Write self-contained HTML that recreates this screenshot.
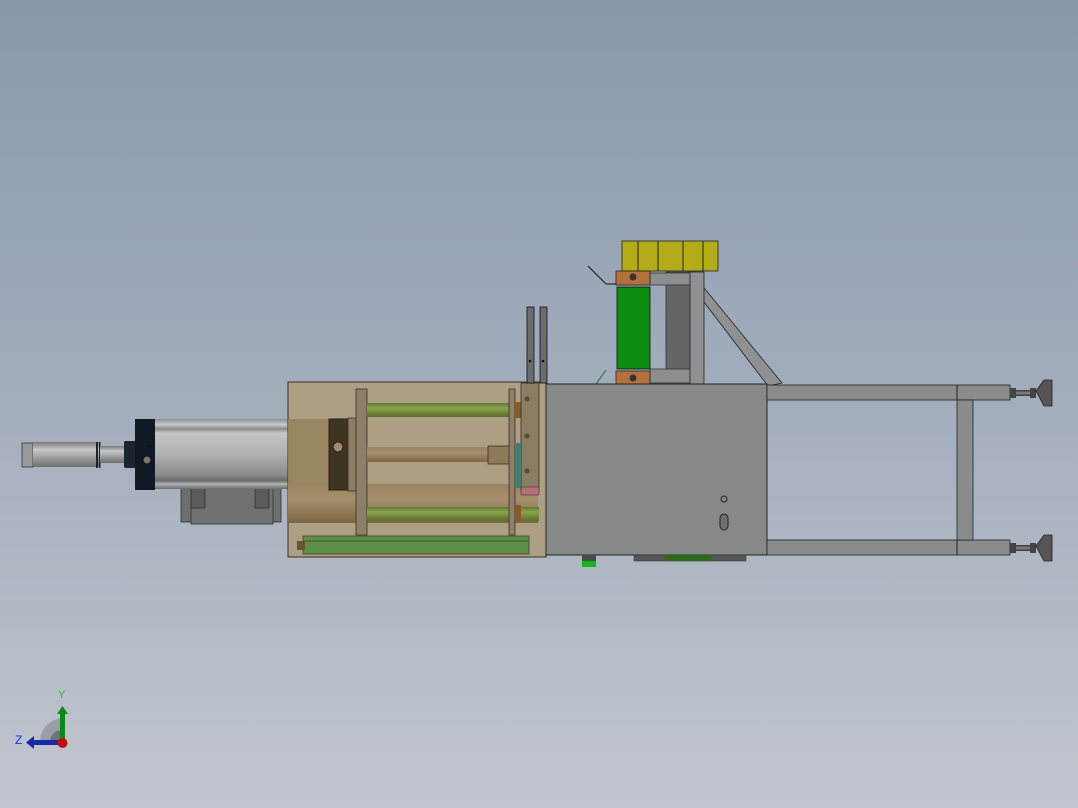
<!DOCTYPE html>
<html><head><meta charset="utf-8"><style>
html,body{margin:0;padding:0;width:1078px;height:808px;overflow:hidden}
body{background:linear-gradient(#8898ad 0%,#a3aebd 50%,#c2c6cf 100%)}
svg{position:absolute;left:0;top:0}
</style></head><body>
<svg width="1078" height="808" viewBox="0 0 1078 808" xmlns="http://www.w3.org/2000/svg">
<defs>
<linearGradient id="cyl" x1="0" y1="0" x2="0" y2="1">
<stop offset="0" stop-color="#8d8f92"/><stop offset="0.08" stop-color="#c8c9cb"/><stop offset="0.14" stop-color="#8a8b8d"/><stop offset="0.2" stop-color="#c4c5c7"/><stop offset="0.5" stop-color="#b0b1b3"/><stop offset="0.8" stop-color="#8a8b8d"/><stop offset="0.88" stop-color="#6a6b6d"/><stop offset="0.93" stop-color="#b0b1b3"/><stop offset="1" stop-color="#6a6b6d"/></linearGradient>
<linearGradient id="rod" x1="0" y1="0" x2="0" y2="1">
<stop offset="0" stop-color="#7a7b7d"/><stop offset="0.3" stop-color="#c6c7c9"/><stop offset="1" stop-color="#6e6f71"/></linearGradient>
<linearGradient id="grn" x1="0" y1="0" x2="0" y2="1">
<stop offset="0" stop-color="#5c7a2c"/><stop offset="0.35" stop-color="#8aa34e"/><stop offset="1" stop-color="#5a6e2a"/></linearGradient>
<linearGradient id="brn" x1="0" y1="0" x2="0" y2="1">
<stop offset="0" stop-color="#9a8460"/><stop offset="0.4" stop-color="#a58f6c"/><stop offset="1" stop-color="#7d6644"/></linearGradient>
<linearGradient id="foot" x1="0" y1="0" x2="0" y2="1">
<stop offset="0" stop-color="#333"/><stop offset="0.5" stop-color="#888"/><stop offset="1" stop-color="#333"/></linearGradient>
</defs>

<rect x="22" y="443" width="11" height="24" fill="#999" stroke="#333" stroke-width="0.8"/>
<rect x="33" y="442" width="66" height="25" fill="url(#rod)"/>
<rect x="96" y="442" width="2" height="26" fill="#222"/><rect x="99" y="442" width="1.5" height="26" fill="#222"/>
<rect x="100" y="446" width="26" height="17" fill="url(#rod)"/>
<rect x="124" y="441" width="12" height="27" fill="#1a2530" rx="2"/>
<rect x="181" y="488" width="100" height="34" fill="#6d6e70" stroke="#333" stroke-width="0.8"/>
<rect x="191" y="488" width="82" height="36" fill="#707172" stroke="#333" stroke-width="0.8"/>
<rect x="191" y="488" width="14" height="20" fill="#5a5b5c" stroke="#333" stroke-width="0.8"/>
<rect x="255" y="488" width="14" height="20" fill="#5a5b5c" stroke="#333" stroke-width="0.8"/>
<rect x="155" y="419" width="135" height="70" fill="url(#cyl)"/>
<rect x="135" y="419" width="20" height="71" fill="#0f1a24"/>
<circle cx="147" cy="460" r="4" fill="#777" stroke="#111"/>
<circle cx="149" cy="446" r="1.5" fill="#111"/>

<rect x="288" y="382" width="258" height="175" fill="#ad9f83" stroke="#3a2e1c" stroke-width="1"/>
<rect x="288" y="419" width="45" height="70" fill="#98835d" opacity="0.9"/>
<rect x="288" y="484" width="250" height="39" fill="url(#brn)"/>
<rect x="329" y="419" width="20" height="71" fill="#3f3422" stroke="#2a2014"/>
<ellipse cx="338" cy="447" rx="5" ry="5" fill="#a08a68" stroke="#2a2014"/>
<rect x="348" y="418" width="9" height="73" fill="#8d7d65" stroke="#3a2e1c" stroke-width="0.8"/>
<rect x="356" y="389" width="11" height="146" fill="#8e7f69" stroke="#3a2e1c" stroke-width="0.8"/>
<rect x="367" y="403" width="172" height="14" fill="url(#grn)"/>
<rect x="367" y="447" width="125" height="15" fill="url(#brn)"/>
<rect x="367" y="507" width="172" height="14" fill="url(#grn)"/>
<rect x="488" y="446" width="22" height="18" fill="#8d7a5a" stroke="#3a2e1c" stroke-width="0.8"/>
<rect x="509" y="389" width="6" height="146" fill="#8e7f69" stroke="#3a2e1c" stroke-width="0.8"/>
<rect x="515" y="402" width="6" height="16" fill="#8a5a26"/><rect x="515" y="505" width="6" height="16" fill="#8a5a26"/>
<rect x="521" y="383" width="18" height="107" fill="#8b7c64" stroke="#3a2e1c" stroke-width="0.8"/>
<rect x="515" y="443" width="6" height="45" fill="#3d7f70"/>
<rect x="521" y="487" width="18" height="8" fill="#b0707a" stroke="#5a2e2e" stroke-width="0.6"/>
<circle cx="527" cy="399" r="2.5" fill="#5a4a30"/><circle cx="527" cy="436" r="2.5" fill="#5a4a30"/><circle cx="527" cy="471" r="2.5" fill="#5a4a30"/>
<rect x="303" y="536" width="226" height="18" fill="#5f8e48" stroke="#3a4a20" stroke-width="0.8"/>
<line x1="303" y1="541" x2="529" y2="541" stroke="#3a4a20" stroke-width="0.7"/>
<rect x="297" y="541" width="8" height="9" fill="#6a5530"/>

<rect x="527" y="307" width="7" height="76" fill="#6b6c6d" stroke="#111" stroke-width="0.8"/>
<rect x="540" y="307" width="7" height="76" fill="#6b6c6d" stroke="#111" stroke-width="0.8"/>
<circle cx="530" cy="361" r="1.3" fill="#111"/><circle cx="543" cy="361" r="1.3" fill="#111"/>

<rect x="666" y="272" width="30" height="110" fill="#646566" stroke="#333" stroke-width="0.8"/>
<rect x="650" y="273" width="40" height="12" fill="#8c8e8f" stroke="#333" stroke-width="0.8"/>
<rect x="650" y="369" width="40" height="14" fill="#8c8e8f" stroke="#333" stroke-width="0.8"/>
<polygon points="691,272 782,383 768,386 704,302" fill="#8e9091" stroke="#222" stroke-width="0.8"/>
<rect x="690" y="272" width="14" height="112" fill="#8e9091" stroke="#222" stroke-width="0.8"/>
<rect x="622" y="241" width="96" height="30" fill="#b3ac18" stroke="#222" stroke-width="0.8"/>
<line x1="638" y1="241" x2="638" y2="271" stroke="#222"/><line x1="658" y1="241" x2="658" y2="271" stroke="#222"/><line x1="683" y1="241" x2="683" y2="271" stroke="#222"/><line x1="703" y1="241" x2="703" y2="271" stroke="#222"/>
<rect x="616" y="271" width="34" height="14" fill="#b4713e" stroke="#222" stroke-width="0.8"/>
<rect x="616" y="371" width="34" height="13" fill="#b4713e" stroke="#222" stroke-width="0.8"/>
<circle cx="633" cy="277" r="3.5" fill="#333"/><circle cx="633" cy="378" r="3.5" fill="#333"/>
<rect x="617" y="287" width="33" height="82" fill="#0b8c10" stroke="#111" stroke-width="0.8"/>
<polyline points="588,266 606,284 616,284" fill="none" stroke="#111" stroke-width="1"/>
<line x1="596" y1="384" x2="606" y2="370" stroke="#2a6a2a"/>

<rect x="546" y="384" width="221" height="171" fill="#858a89" stroke="#222" stroke-width="1"/>
<circle cx="724" cy="499" r="3" fill="none" stroke="#222"/>
<rect x="720" y="514" width="8" height="16" rx="4" fill="#6c7070" stroke="#222"/>
<rect x="582" y="555" width="14" height="12" fill="#4a4a4a"/><rect x="582" y="561" width="14" height="6" fill="#12b51a"/>
<rect x="634" y="555" width="112" height="6" fill="#555" stroke="#333" stroke-width="0.5"/>
<rect x="665" y="555" width="46" height="6" fill="#2a6a1a"/>

<rect x="767" y="385" width="243" height="15" fill="#888c8b" stroke="#222" stroke-width="0.8"/>
<rect x="767" y="540" width="243" height="15" fill="#888c8b" stroke="#222" stroke-width="0.8"/>
<rect x="957" y="400" width="16" height="140" fill="#888c8b" stroke="#222" stroke-width="0.8"/>
<line x1="957" y1="385" x2="957" y2="400" stroke="#222"/><line x1="957" y1="540" x2="957" y2="555" stroke="#222"/>
<g>
<rect x="1010" y="388" width="6" height="10" fill="#444"/><rect x="1016" y="390" width="14" height="6" fill="url(#foot)"/><rect x="1030" y="388" width="6" height="10" fill="#444"/>
<path d="M1036 391 L1044 380 L1052 380 L1052 406 L1044 406 Z" fill="#555" stroke="#222" stroke-width="0.8"/>
<rect x="1010" y="543" width="6" height="10" fill="#444"/><rect x="1016" y="545" width="14" height="6" fill="url(#foot)"/><rect x="1030" y="543" width="6" height="10" fill="#444"/>
<path d="M1036 546 L1044 535 L1052 535 L1052 561 L1044 561 Z" fill="#555" stroke="#222" stroke-width="0.8"/>
</g>

<path d="M40 742 A24 24 0 0 1 62 718 L62 742 Z" fill="#9a9ea4"/>
<path d="M50 742 A12 12 0 0 1 62 730 L62 742 Z" fill="#6d7178"/>
<rect x="60" y="712" width="5" height="30" fill="#0a8a14"/>
<polygon points="57,714 62.5,706 68,714" fill="#0a8a14"/>
<rect x="32" y="740" width="28" height="5" fill="#1a2aa6"/>
<polygon points="34,736 26,742.5 34,749" fill="#1a2aa6"/>
<circle cx="62.5" cy="743" r="5" fill="#c01010"/>
<text x="58" y="698" font-family="Liberation Sans, sans-serif" font-size="11" fill="#20c020">Y</text>
<text x="15" y="744" font-family="Liberation Sans, sans-serif" font-size="12" fill="#1a2aff">Z</text>
</svg>
</body></html>
